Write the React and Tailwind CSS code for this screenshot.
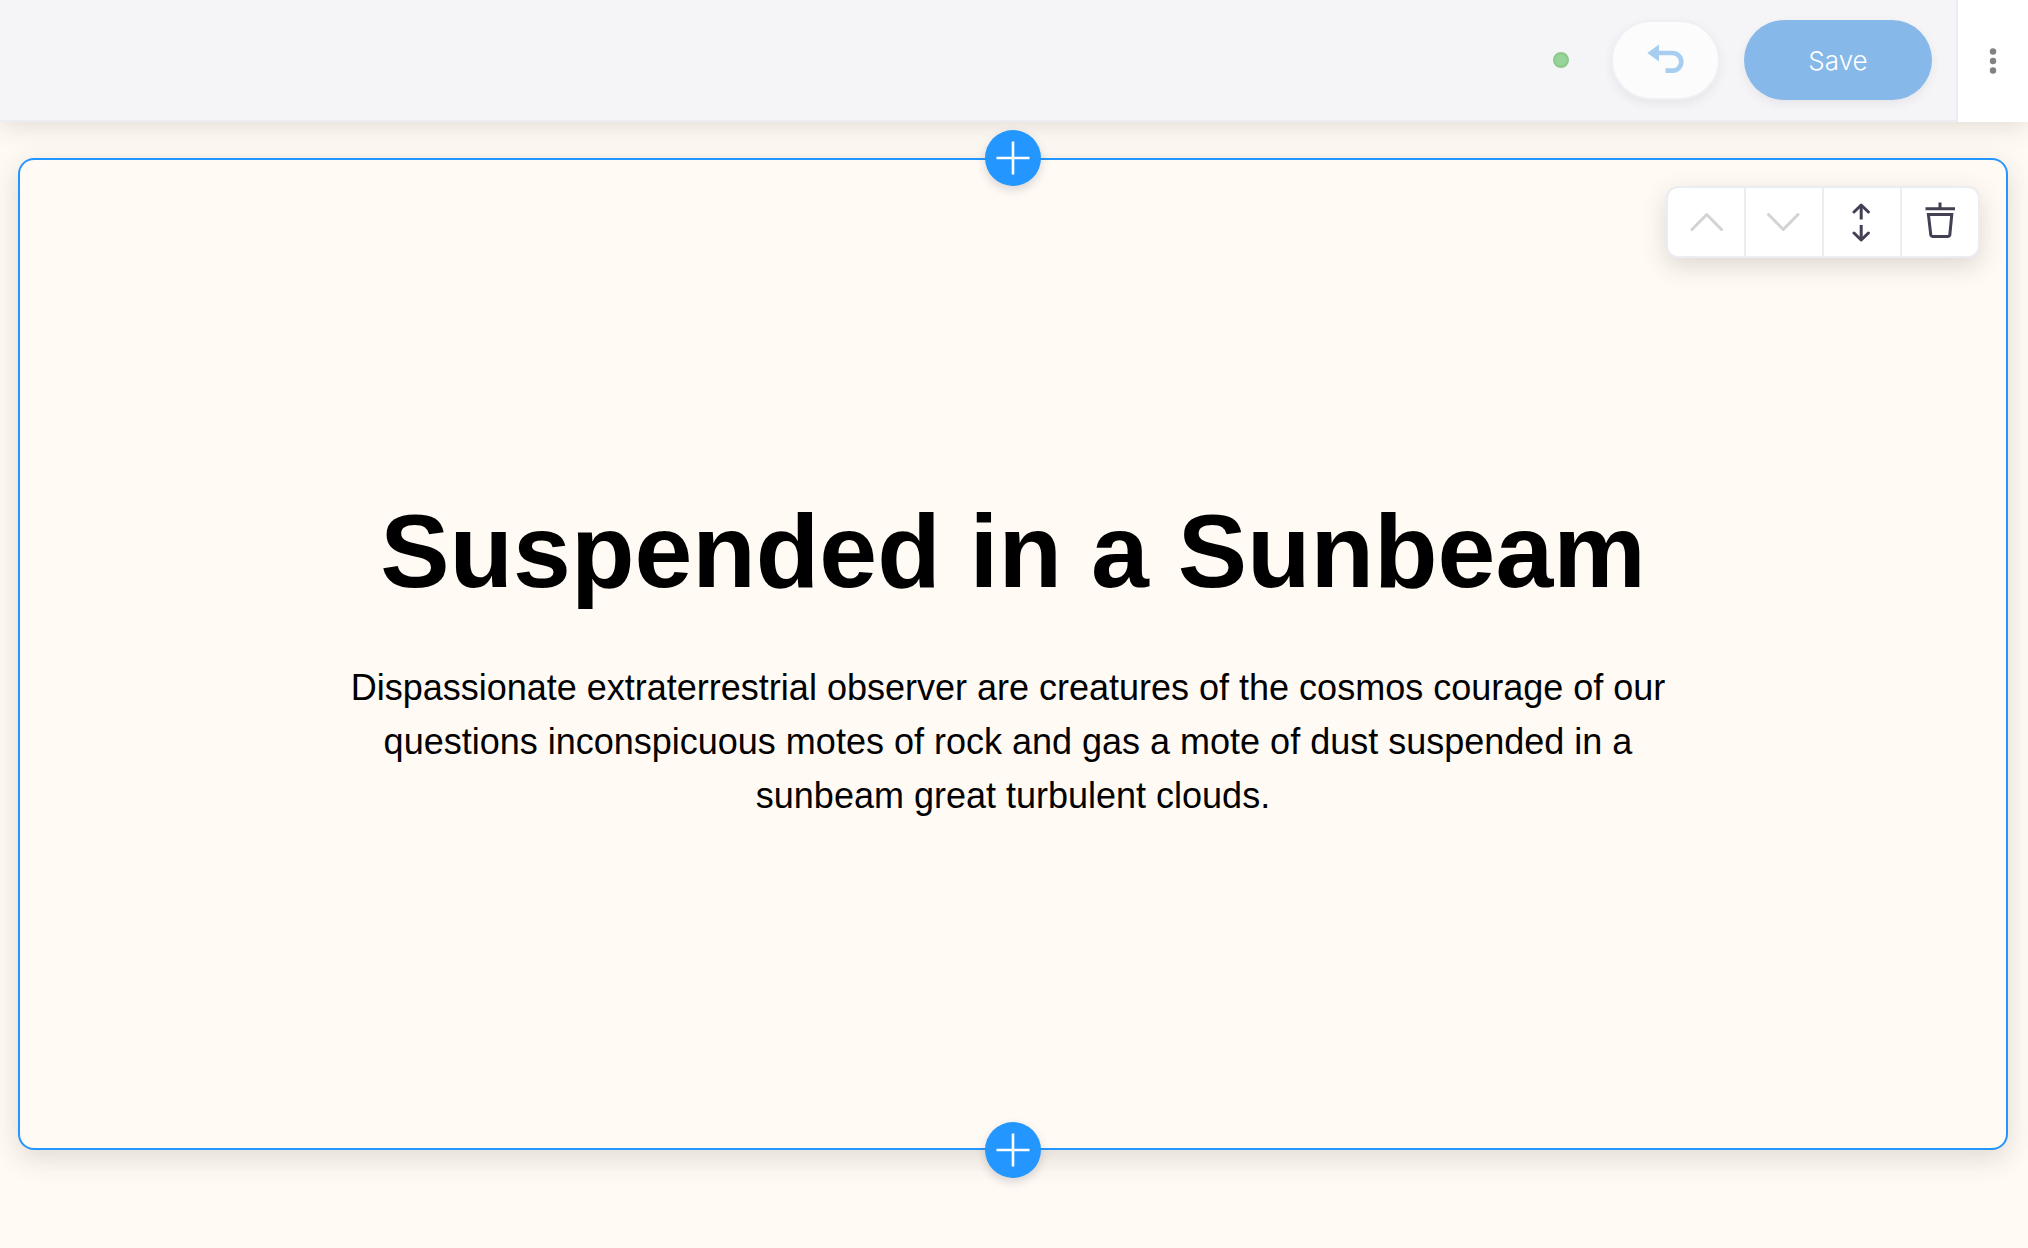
const iconProps = {
  width: 40,
  height: 40,
  viewBox: "0 0 40 40",
  fill: "none",
  stroke: "currentColor",
  "aria-hidden": true,
};

function ChevronUp() {
  return (
    <svg {...iconProps} strokeWidth="3" strokeLinecap="round" strokeLinejoin="round">
      <path d="M6 27.5 L20.7 12.5 L35.5 27.5" />
    </svg>
  );
}

function ChevronDown() {
  return (
    <svg {...iconProps} strokeWidth="3" strokeLinecap="round" strokeLinejoin="round">
      <path d="M4.5 12.5 L19.3 27.5 L34 12.5" />
    </svg>
  );
}

function MoveVertical() {
  return (
    <svg {...iconProps} strokeWidth="3" strokeLinecap="round" strokeLinejoin="round">
      <path d="M12 10 L19.2 3 L26.4 10 M12 31 L19.2 38 L26.4 31" />
      <path d="M19.2 3 V17.5 M19.2 23 V38" strokeLinecap="butt" />
    </svg>
  );
}

function Trash() {
  return (
    <svg {...iconProps} strokeWidth="3" strokeLinejoin="miter">
      <path d="M5.5 6.7 H35 M20 0.5 V6" />
      <path d="M8.4 12.4 H31.8 L29.8 33 Q29.4 34.4 28 34.4 H12.6 Q11.2 34.4 10.8 33 Z" />
    </svg>
  );
}

function Undo() {
  return (
    <svg width="40" height="32" viewBox="0 0 40 32" aria-hidden="true">
      <path d="M1.3 9 L13 0.5 V17.5 Z" fill="currentColor" />
      <path d="M12 9 H26.5 a8.8 8.8 0 0 1 0 17.6 H19.5" fill="none" stroke="currentColor" strokeWidth="4.6" />
    </svg>
  );
}

function AddButton({ label, edge }) {
  return (
    <button
      type="button"
      aria-label={label}
      className={`absolute left-1/2 flex size-14 -translate-x-1/2 items-center justify-center rounded-full bg-[#2496ff] text-white shadow-[0_4px_10px_rgba(69,63,84,0.2)] ${edge}`}
    >
      <svg width="34" height="34" viewBox="0 0 34 34" stroke="currentColor" strokeWidth="2.6" aria-hidden="true">
        <path d="M17 0.5 V33.5 M0.5 17 H33.5" />
      </svg>
    </button>
  );
}

const tools = [
  { label: "Move up", Icon: ChevronUp, disabled: true },
  { label: "Move down", Icon: ChevronDown, disabled: true },
  { label: "Drag to reorder", Icon: MoveVertical },
  { label: "Delete", Icon: Trash },
];

export default function App() {
  return (
    <div className="flex min-h-screen flex-col bg-[#fffaf4] font-['Liberation_Sans',Arial,sans-serif] text-black">
      <header className="flex h-[122px] shadow-[0_4px_24px_rgba(60,50,40,0.15)]">
        <div className="flex flex-1 items-center justify-end gap-6 border-r-2 border-b-2 border-[#ececf3] bg-[#f5f5f8] pr-6">
          <span className="mr-[18px] size-4 rounded-full border-2 border-[#8cc98d] bg-[#98d397]" />
          <button
            type="button"
            aria-label="Undo"
            className="flex h-20 w-[109px] items-center justify-center rounded-full border-2 border-[#f0f0f4] bg-[#fcfcfd] text-[#a7cdf0] shadow-[0_4px_10px_rgba(60,50,60,0.08)]"
          >
            <Undo />
          </button>
          <button
            type="button"
            className="h-20 w-[188px] rounded-full bg-[#86b8ea] font-['Inter',sans-serif] text-[26px] font-light text-white shadow-[0_4px_10px_rgba(60,50,60,0.08)]"
          >
            Save
          </button>
        </div>
        <button type="button" aria-label="More options" className="flex w-[70px] items-center justify-center bg-white text-[#828282]">
          <svg width="8" height="26" viewBox="0 0 8 26" fill="currentColor" aria-hidden="true">
            <circle cx="4" cy="3.5" r="3.2" />
            <circle cx="4" cy="13" r="3.2" />
            <circle cx="4" cy="22.5" r="3.2" />
          </svg>
        </button>
      </header>

      <main className="flex flex-1 flex-col pt-9 pr-5 pb-[98px] pl-[18px]">
        <section className="relative flex flex-1 items-center justify-center rounded-2xl bg-[#2496ff] p-0.5 shadow-[0_8px_28px_rgba(60,50,40,0.16)]">
          <div className="flex flex-1 flex-col items-center justify-center self-stretch rounded-[14px] bg-[#fffaf4] text-center">
            <h1 className="text-[104px] leading-[132px] font-bold">Suspended in a Sunbeam</h1>
            <p className="mt-11 max-w-[1352px] text-[36px] leading-[54px] whitespace-break-spaces">
              Dispassionate extraterrestrial observer are creatures of the cosmos courage of our questions inconspicuous motes of rock and gas a mote of dust suspended in a sunbeam great turbulent clouds.
            </p>
          </div>

          <div
            role="toolbar"
            aria-label="Section actions"
            className="absolute top-7 right-7 flex divide-x-2 divide-[#ececf3] overflow-hidden rounded-xl border-2 border-[#ececf3] bg-white shadow-[0_8px_24px_rgba(60,50,40,0.17)]"
          >
            {tools.map(({ label, Icon, disabled }) => (
              <button
                key={label}
                type="button"
                aria-label={label}
                disabled={disabled}
                className="box-content flex h-[68px] w-[76px] items-center justify-center text-[#453f54] disabled:text-[#d3d3d3]"
              >
                <Icon />
              </button>
            ))}
          </div>

          <AddButton label="Add section above" edge="-top-7" />
          <AddButton label="Add section below" edge="-bottom-7" />
        </section>
      </main>
    </div>
  );
}
